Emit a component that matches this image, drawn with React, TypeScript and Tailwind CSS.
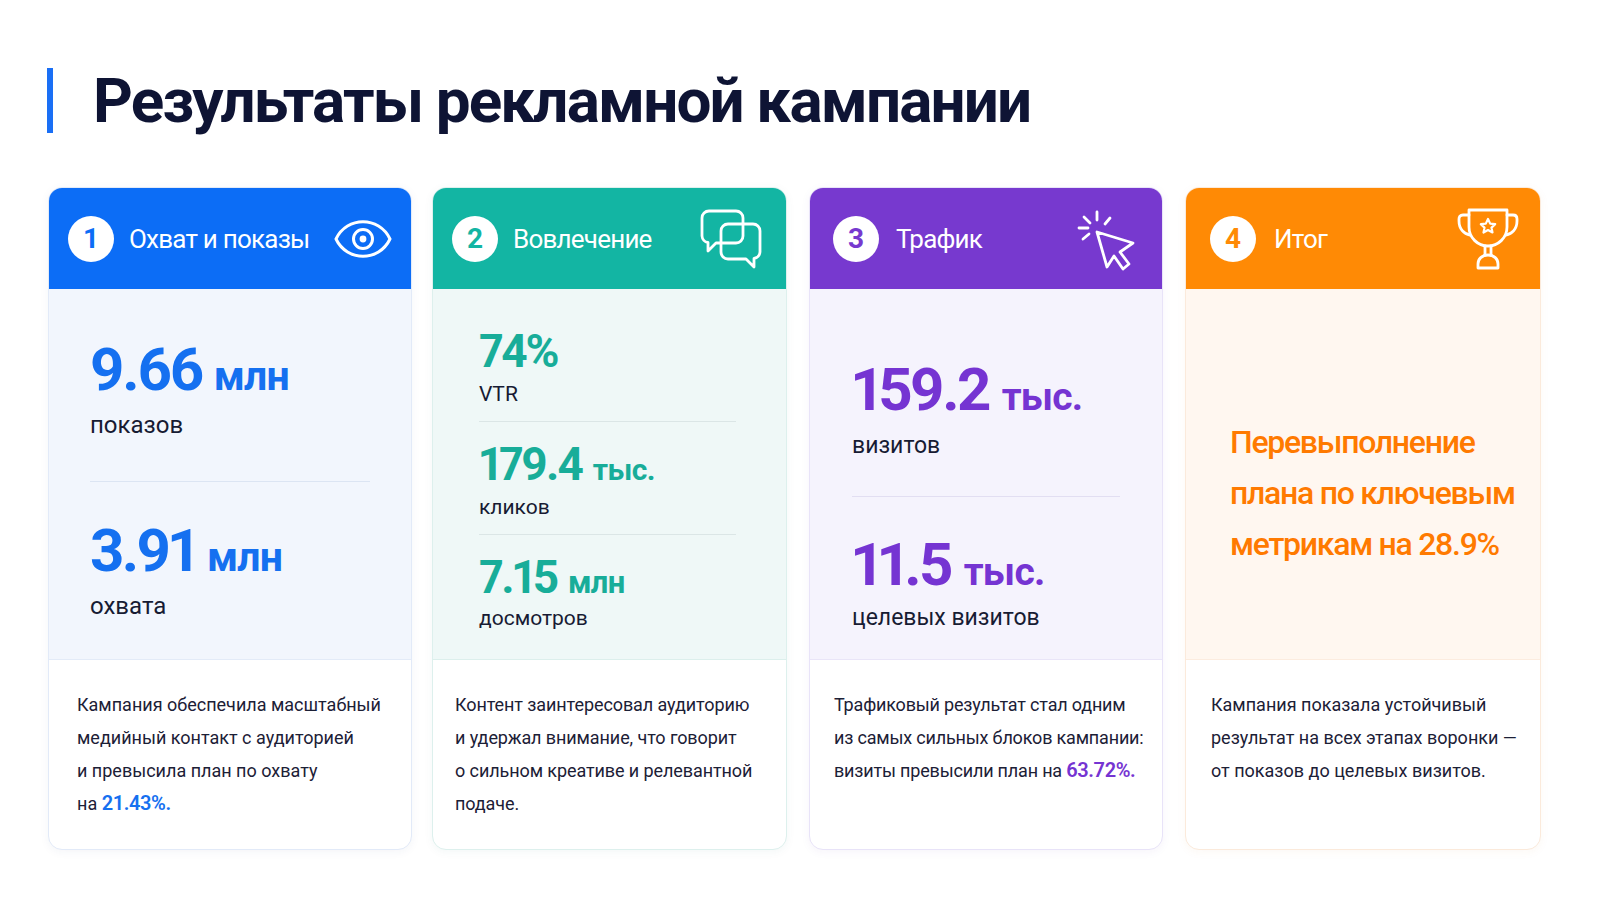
import React from "react";

const EyeIcon = () => (
  <svg width="60" height="40" viewBox="0 0 60 40" fill="none" stroke="white" strokeWidth="3" strokeLinecap="round" strokeLinejoin="round">
    <path d="M3 20 C 14 -3, 46 -3, 57 20 C 46 43, 14 43, 3 20 Z" />
    <circle cx="30" cy="20" r="9.5" />
    <circle cx="30" cy="20" r="3.4" fill="white" stroke="none" />
  </svg>
);

const ChatIcon = () => (
  <svg width="62" height="60" viewBox="0 0 62 60" fill="none" stroke="white" strokeWidth="2.8" strokeLinecap="round" strokeLinejoin="round">
    <path d="M9 2 H36 A7 7 0 0 1 43 9 V27 A7 7 0 0 1 36 34 H16 L8 42 V33.5 A7 7 0 0 1 2 27 V9 A7 7 0 0 1 9 2 Z" />
    <path d="M28 15 H53 A7 7 0 0 1 60 22 V43 A7 7 0 0 1 54 49.5 V58 L46 50 H28 A7 7 0 0 1 21 43 V22 A7 7 0 0 1 28 15 Z" />
  </svg>
);

const CursorIcon = () => (
  <svg width="62" height="70" viewBox="0 0 62 70" fill="none" stroke="white" strokeWidth="2.8" strokeLinecap="round" strokeLinejoin="round">
    <path d="M10 13 L16 19" />
    <path d="M23 8 V16" />
    <path d="M36 14 L31 20" />
    <path d="M5 24 H14" />
    <path d="M9 35 L15 30" />
    <path d="M23 28 L33 63 L40 52 L49 65 L55 60 L46 48 L59 39 Z" />
  </svg>
);

const TrophyIcon = () => (
  <svg width="62" height="64" viewBox="0 0 62 64" fill="none" stroke="white" strokeWidth="2.8" strokeLinecap="round" strokeLinejoin="round">
    <path d="M12 3 H50 V20 C50 31 41 39 31 39 C21 39 12 31 12 20 Z" />
    <path d="M12 8 H6 C3 8 2 10 2 12 V14 C2 22 7 27 13 28" />
    <path d="M50 8 H56 C59 8 60 10 60 12 V14 C60 22 55 27 49 28" />
    <path d="M28 39 V48 M34 39 V48" />
    <path d="M21 61 V57 C21 52 25 48 31 48 C37 48 41 52 41 57 V61 Z" />
    <path d="M31 12 L33.2 16.6 L38.2 17.2 L34.5 20.6 L35.5 25.5 L31 23 L26.5 25.5 L27.5 20.6 L23.8 17.2 L28.8 16.6 Z" strokeWidth="2.2" />
  </svg>
);

function Header({ n, title, color, numColor, icon, pl, pr, gap }: { n: string; title: string; color: string; numColor: string; icon: React.ReactNode; pl: string; pr: string; gap: string }) {
  return (
    <div className={`flex h-[101px] shrink-0 items-center ${pl} ${color} ${pr}`}>
      <div className={`flex h-[46px] w-[46px] items-center justify-center rounded-full bg-white text-[28px] font-bold leading-none ${numColor}`}>
        {n}
      </div>
      <span className={`${gap} text-[26px] leading-none tracking-[-0.03em] text-white`}>{title}</span>
      <div className="ml-auto flex items-center">{icon}</div>
    </div>
  );
}

export default function App() {
  const font = "font-['Roboto','Noto_Sans',sans-serif]";
  const big = "proportional-nums font-bold leading-none tracking-[-0.045em]";
  return (
    <div className={`min-h-screen w-[1599px] bg-white pt-[68px] ${font}`}>
      <div className="ml-[47px] flex h-[65px] items-center">
        <div className="h-[65px] w-[6px] bg-[#1a6ff5]" />
        <h1 className="ml-[40px] text-[62px] font-bold leading-none tracking-[-0.03em] text-[#0e1434]">
          Результаты рекламной кампании
        </h1>
      </div>

      <div className="ml-[48px] mt-[54px] flex">
        {/* Card 1 */}
        <div className="flex h-[663px] w-[364px] flex-col overflow-hidden rounded-[14px] border border-[#e2eaf8] bg-white shadow-[0_2px_10px_rgba(30,60,120,0.05)]">
          <Header n="1" title="Охват и показы" color="bg-[#0c6df6]" numColor="text-[#0c6df6]" icon={<EyeIcon />} pl="pl-[19px]" pr="pr-[18px]" gap="ml-[15px]" />
          <div className="h-[371px] shrink-0 border-b border-[#e3ebf8] bg-[#f2f6fd] px-[41px] pt-[51px]">
            <div className="flex items-baseline text-[#1570f0]">
              <span className={`text-[60px] ${big}`}>9.66</span>
              <span className="ml-[12px] text-[41px] font-bold leading-none tracking-[-0.02em]">млн</span>
            </div>
            <div className="mt-[11px] text-[24px] leading-[1.2] text-[#171b33]">показов</div>
            <div className="mt-[41px] h-px bg-[#dce5f3]" />
            <div className="mt-[39px] flex items-baseline text-[#1570f0]">
              <span className={`text-[60px] ${big}`}>3.91</span>
              <span className="ml-[12px] text-[41px] font-bold leading-none tracking-[-0.02em]">млн</span>
            </div>
            <div className="mt-[11px] text-[24px] leading-[1.2] text-[#171b33]">охвата</div>
          </div>
          <div className="flex-1 pl-[28px] pr-[14px] pt-[28px] text-[18px] leading-[33px] text-[#1c2036]">
            <div className="whitespace-nowrap">Кампания обеспечила масштабный</div>
            <div className="whitespace-nowrap">медийный контакт с аудиторией</div>
            <div className="whitespace-nowrap">и превысила план по охвату</div>
            <div className="whitespace-nowrap">
              на <span className="text-[20px] font-semibold tracking-[-0.02em] text-[#1570f0]">21.43%.</span>
            </div>
          </div>
        </div>

        {/* Card 2 */}
        <div className="ml-[20px] flex h-[663px] w-[355px] flex-col overflow-hidden rounded-[14px] border border-[#ddf0ed] bg-white shadow-[0_2px_10px_rgba(20,100,90,0.05)]">
          <Header n="2" title="Вовлечение" color="bg-[#13b5a3]" numColor="text-[#13b5a3]" icon={<ChatIcon />} pl="pl-[19px]" pr="pr-[24px]" gap="ml-[15px]" />
          <div className="h-[371px] shrink-0 border-b border-[#dcefec] bg-[#eff8f7] pl-[46px] pr-[50px] pt-[39px]">
            <div className={`text-[46px] text-[#18ad99] ${big}`}>74%</div>
            <div className="mt-[8px] text-[21px] leading-[25px] text-[#171b33]">VTR</div>
            <div className="mt-[14px] h-px bg-[#dbe6e6]" />
            <div className="mt-[19px] flex items-baseline text-[#18ad99]">
              <span className={`text-[46px] ${big}`}>179.4</span>
              <span className="ml-[11px] text-[30px] font-bold leading-none tracking-[-0.02em]">тыс.</span>
            </div>
            <div className="mt-[8px] text-[21px] leading-[25px] text-[#171b33]">кликов</div>
            <div className="mt-[14px] h-px bg-[#dbe6e6]" />
            <div className="mt-[19px] flex items-baseline text-[#18ad99]">
              <span className={`text-[46px] ${big}`}>7.15</span>
              <span className="ml-[11px] text-[31px] font-bold leading-none tracking-[-0.02em]">млн</span>
            </div>
            <div className="mt-[6px] text-[21px] leading-[25px] text-[#171b33]">досмотров</div>
          </div>
          <div className="flex-1 pl-[22px] pr-[8px] pt-[28px] text-[18px] leading-[33px] tracking-[-0.005em] text-[#1c2036]">
            <div className="whitespace-nowrap">Контент заинтересовал аудиторию</div>
            <div className="whitespace-nowrap">и удержал внимание, что говорит</div>
            <div className="whitespace-nowrap">о сильном креативе и релевантной</div>
            <div className="whitespace-nowrap">подаче.</div>
          </div>
        </div>

        {/* Card 3 */}
        <div className="ml-[22px] flex h-[663px] w-[354px] flex-col overflow-hidden rounded-[14px] border border-[#e8e3f8] bg-white shadow-[0_2px_10px_rgba(80,40,160,0.05)]">
          <Header n="3" title="Трафик" color="bg-[#7739cf]" numColor="text-[#7739cf]" icon={<CursorIcon />} pl="pl-[23px]" pr="pr-[26px]" gap="ml-[17px]" />
          <div className="h-[371px] shrink-0 border-b border-[#e9e5f8] bg-[#f5f3fd] pl-[42px] pr-[42px] pt-[71px]">
            <div className="flex items-baseline text-[#7534d2]">
              <span className={`text-[60px] ${big}`}>159.2</span>
              <span className="ml-[13px] text-[39px] font-bold leading-none tracking-[-0.02em]">тыс.</span>
            </div>
            <div className="mt-[12px] text-[23px] leading-[1.2] text-[#171b33]">визитов</div>
            <div className="mt-[36px] h-px bg-[#e2def2]" />
            <div className="mt-[38px] flex items-baseline text-[#7534d2]">
              <span className={`text-[60px] ${big}`}>11.5</span>
              <span className="ml-[13px] text-[39px] font-bold leading-none tracking-[-0.02em]">тыс.</span>
            </div>
            <div className="mt-[9px] text-[23px] leading-[1.2] text-[#171b33]">целевых визитов</div>
          </div>
          <div className="flex-1 pl-[24px] pr-[6px] pt-[28px] text-[18px] leading-[33px] tracking-[-0.01em] text-[#1c2036]">
            <div className="whitespace-nowrap">Трафиковый результат стал одним</div>
            <div className="whitespace-nowrap">из самых сильных блоков кампании:</div>
            <div className="whitespace-nowrap">
              визиты превысили план на <span className="text-[20px] font-semibold tracking-[-0.02em] text-[#7534d2]">63.72%.</span>
            </div>
          </div>
        </div>

        {/* Card 4 */}
        <div className="ml-[22px] flex h-[663px] w-[356px] flex-col overflow-hidden rounded-[14px] border border-[#fbeadb] bg-white shadow-[0_2px_10px_rgba(200,120,40,0.05)]">
          <Header n="4" title="Итог" color="bg-[#ff8a05]" numColor="text-[#ff8a05]" icon={<TrophyIcon />} pl="pl-[24px]" pr="pr-[21px]" gap="ml-[18px]" />
          <div className="h-[371px] shrink-0 border-b border-[#fcecdf] bg-[#fff7f0] pl-[44px] pr-[16px] pt-[128px]">
            <div className="text-[32px] font-medium leading-[51px] tracking-[-0.04em] text-[#ff7a00]">
              <div className="whitespace-nowrap">Перевыполнение</div>
              <div className="whitespace-nowrap">плана по ключевым</div>
              <div className="whitespace-nowrap">метрикам на 28.9%</div>
            </div>
          </div>
          <div className="flex-1 pl-[25px] pr-[6px] pt-[28px] text-[18px] leading-[33px] text-[#1c2036]">
            <div className="whitespace-nowrap">Кампания показала устойчивый</div>
            <div className="whitespace-nowrap">результат на всех этапах воронки —</div>
            <div className="whitespace-nowrap">от показов до целевых визитов.</div>
          </div>
        </div>
      </div>
    </div>
  );
}
